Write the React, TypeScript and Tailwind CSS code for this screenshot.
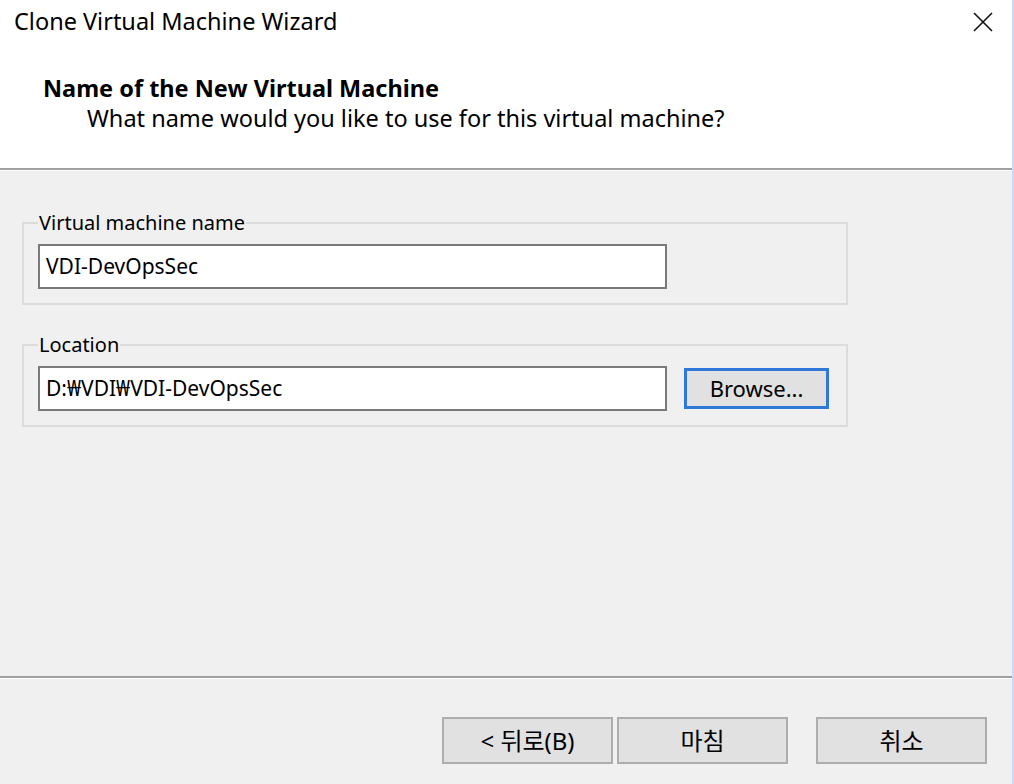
import React from "react";

const font = { fontFamily: '"Noto Sans", "Noto Sans CJK KR", sans-serif' };

function GroupBox({ label, children }: { label: string; children: React.ReactNode }) {
  return (
    <fieldset className="w-[826px] border-2 border-[#dcdcdc] px-[14px] pb-[14px] pt-[8px]">
      <legend className="px-[1px] text-[20px] leading-[26px] text-black">{label}</legend>
      {children}
    </fieldset>
  );
}

function TextBox({ value }: { value: string }) {
  return (
    <div className="flex h-[45px] w-[629px] items-center border-2 border-[#7a7a7a] bg-white px-[6px] text-[21px] text-black">
      {value}
    </div>
  );
}

function DialogButton({ label }: { label: string }) {
  return (
    <button className="flex h-[47px] w-[171px] items-center justify-center border-2 border-[#adadad] bg-[#e1e1e1] text-[24px] text-black">
      {label}
    </button>
  );
}

export default function App() {
  return (
    <div style={font} className="flex h-[784px] w-[1014px] flex-col overflow-hidden border-r-2 border-[#c9dbf2] bg-[#f0f0f0]">
      {/* title bar + header */}
      <div className="bg-white">
        <div className="flex h-[44px] items-center justify-between pl-[14px] pr-[18px]">
          <span className="text-[23.5px] text-black">Clone Virtual Machine Wizard</span>
          <svg width="22" height="22" viewBox="0 0 22 22" className="mt-[-1px]">
            <path d="M2 2 L20 20 M20 2 L2 20" stroke="#111" strokeWidth="1.6" />
          </svg>
        </div>
        <div className="h-[124px] pl-[43px] pt-[30px]">
          <div className="text-[23.5px] font-bold leading-[28px] text-black">Name of the New Virtual Machine</div>
          <div className="pl-[44px] text-[23.5px] leading-[32px] text-black">What name would you like to use for this virtual machine?</div>
        </div>
      </div>
      <div className="h-[2px] bg-[#a0a0a0]" />
      <div className="h-[1px] bg-white" />

      {/* body */}
      <div className="flex flex-1 flex-col gap-[27px] pl-[22px] pt-[39px]">
        <GroupBox label="Virtual machine name">
          <TextBox value="VDI-DevOpsSec" />
        </GroupBox>
        <GroupBox label="Location">
          <div className="flex items-center gap-[17px]">
            <TextBox value="D:₩VDI₩VDI-DevOpsSec" />
            <button className="flex h-[41px] w-[145px] items-center justify-center border-[3px] border-[#2f78d8] bg-[#e1e1e1] text-[22px] text-black">
              Browse...
            </button>
          </div>
        </GroupBox>
      </div>

      <div className="h-[2px] bg-[#a0a0a0]" />
      <div className="h-[1px] bg-white" />

      {/* footer */}
      <div className="flex h-[105px] items-start justify-end pr-[25px] pt-[38px]">
        <div className="flex gap-[4px]">
          <DialogButton label="< 뒤로(B)" />
          <DialogButton label="마침" />
        </div>
        <div className="ml-[28px]">
          <DialogButton label="취소" />
        </div>
      </div>
    </div>
  );
}
